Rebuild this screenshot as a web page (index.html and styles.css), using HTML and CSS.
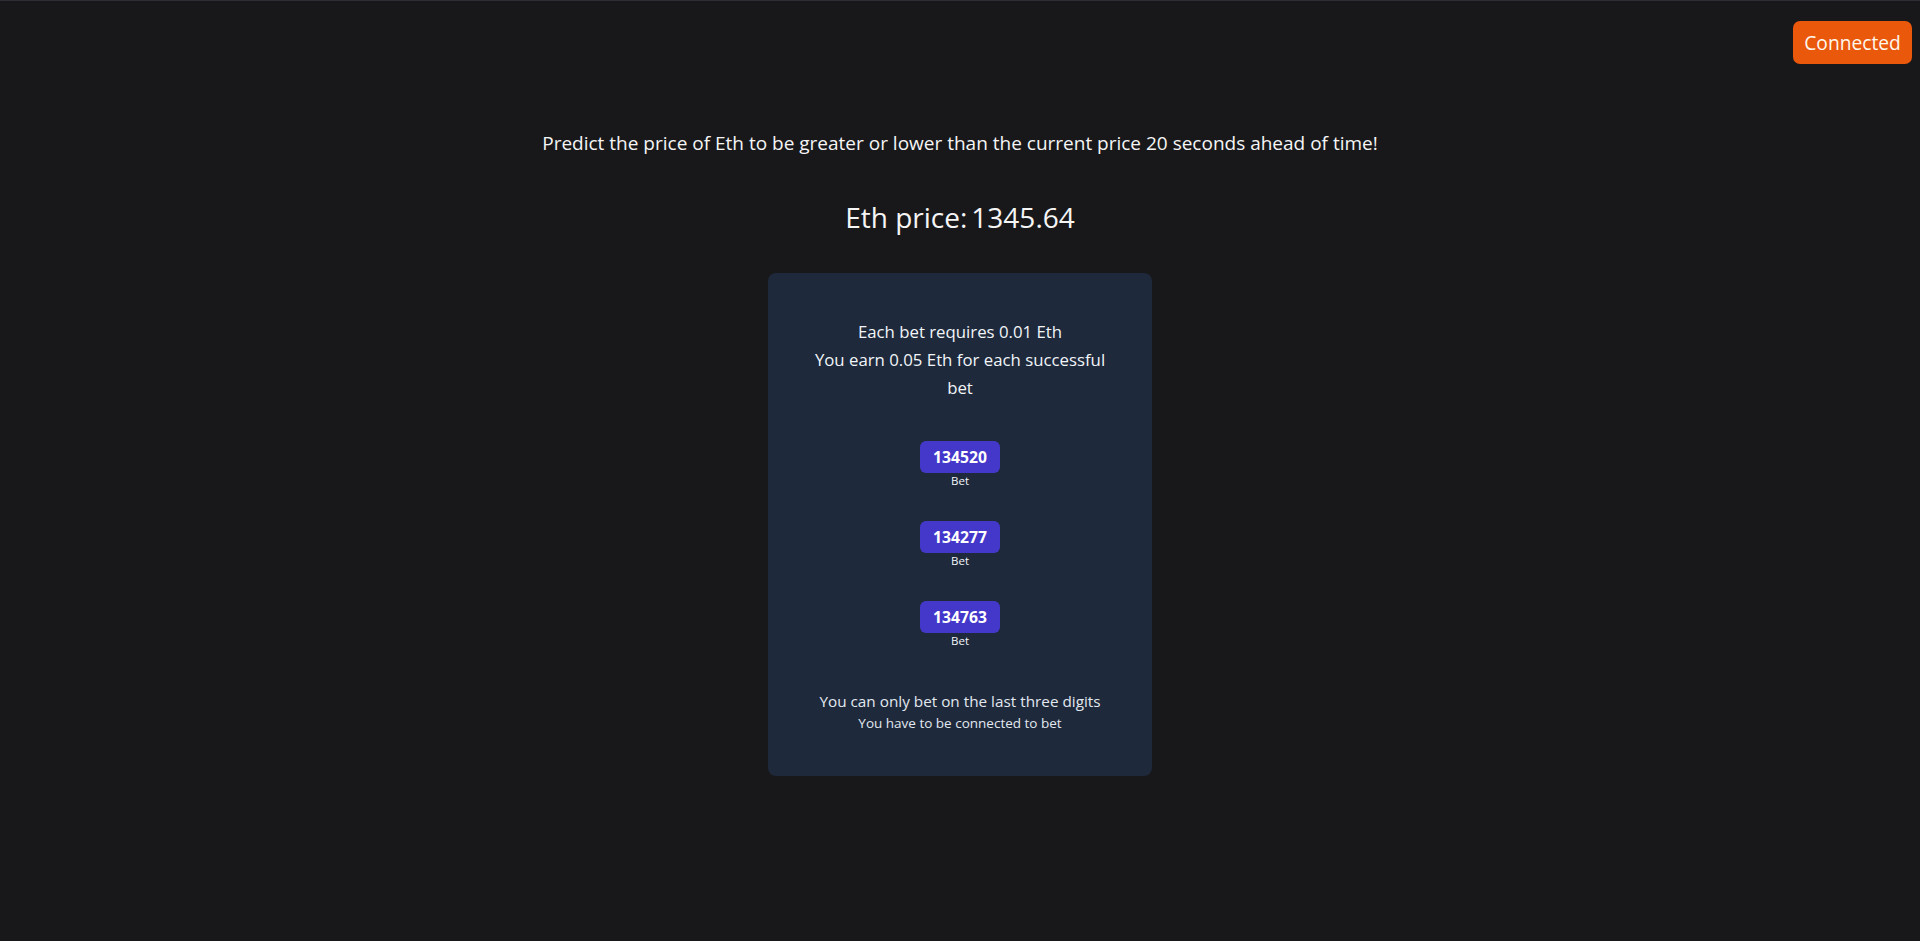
FILE: index.html
```html
<!DOCTYPE html>
<html lang="en">
<head>
<meta charset="utf-8">
<title>Eth price bet</title>
<link rel="stylesheet" href="styles.css">
</head>
<body>
<header class="topbar">
  <button class="connect-btn">Connected</button>
</header>
<main class="main">
  <p class="intro">Predict the price of Eth to be greater or lower than the current price 20 seconds ahead of time!</p>
  <h1 class="price"><span>Eth price:</span><span class="price-value">1345.64</span></h1>
  <section class="card">
    <p class="rules">Each bet requires 0.01 Eth<br>You earn 0.05 Eth for each successful bet</p>
    <div class="bets">
      <div class="bet"><button class="bet-btn">134520</button><span class="bet-label">Bet</span></div>
      <div class="bet"><button class="bet-btn">134277</button><span class="bet-label">Bet</span></div>
      <div class="bet"><button class="bet-btn">134763</button><span class="bet-label">Bet</span></div>
    </div>
    <div class="notes">
      <p class="note-main">You can only bet on the last three digits</p>
      <p class="note-sub">You have to be connected to bet</p>
    </div>
  </section>
</main>
</body>
</html>
```
FILE: styles.css
```css
* { box-sizing: border-box; }
html, body { margin: 0; padding: 0; }
body {
  background: #18181b;
  color: #f5f5f5;
  font-family: "Open Sans", "Noto Sans", sans-serif;
  min-height: 941px;
  border-top: 1px solid #2e2d35;
}
p, h1 { margin: 0; }
.topbar {
  display: flex;
  justify-content: flex-end;
  padding: 20px 8px 0 0;
}
.connect-btn {
  background: #ea580c;
  color: #fff7ed;
  border: none;
  border-radius: 7px;
  height: 43px;
  width: 119px;
  font-family: inherit;
  font-size: 19.2px;
  padding: 0;
}
.main {
  display: flex;
  flex-direction: column;
  align-items: center;
}
.intro {
  margin-top: 65px;
  font-size: 19px;
  line-height: 28px;
}
.price {
  margin-top: 42px;
  font-size: 28px;
  line-height: 36px;
  font-weight: 400;
  display: flex;
  gap: 4px;
}
.card {
  margin-top: 38px;
  width: 384px;
  background: #1e293b;
  border-radius: 8px;
  padding: 45px 40px 43px;
  display: flex;
  flex-direction: column;
  align-items: center;
  text-align: center;
}
.rules {
  font-size: 16.8px;
  line-height: 28px;
  color: #f1f5f9;
}
.bets {
  margin-top: 39px;
  display: flex;
  flex-direction: column;
  align-items: center;
  gap: 32px;
}
.bet {
  display: flex;
  flex-direction: column;
  align-items: center;
}
.bet-btn {
  width: 80px;
  height: 32px;
  background: #4338ca;
  color: #fff;
  border: none;
  border-radius: 6px;
  font-family: inherit;
  font-weight: 700;
  font-size: 15.7px;
  padding: 0;
}
.bet-label {
  font-size: 11.5px;
  line-height: 16px;
  color: #f1f5f9;
}
.notes {
  margin-top: 40px;
}
.note-main {
  font-size: 15.3px;
  line-height: 24px;
  color: #e2e8f0;
}
.note-sub {
  font-size: 13.5px;
  line-height: 20px;
  color: #e2e8f0;
}
```
